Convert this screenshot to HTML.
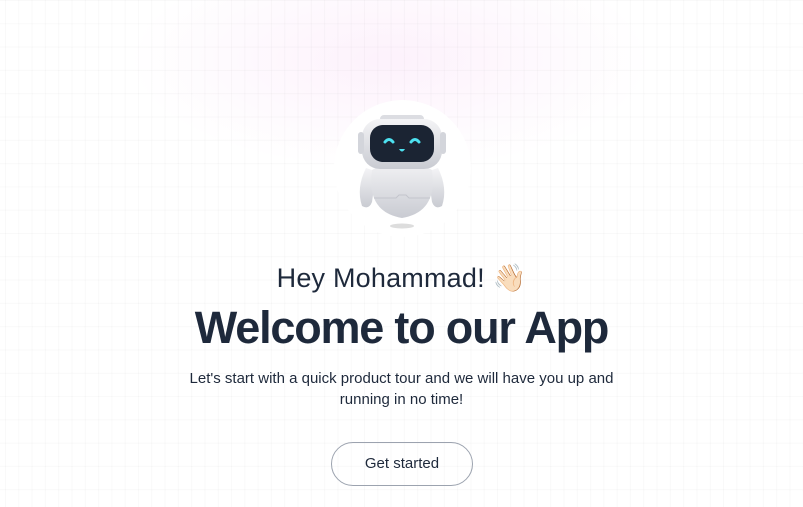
<!DOCTYPE html>
<html><head><meta charset="utf-8"><style>
html,body{margin:0;padding:0}
body{width:803px;height:507px;overflow:hidden;position:relative;font-family:"Liberation Sans",sans-serif;color:#1e293b;
background:
radial-gradient(ellipse 260px 110px at 390px 60px, rgba(250,225,248,0.45), rgba(255,255,255,0) 100%),
#fff;}
.grid{position:absolute;inset:0;background-image:linear-gradient(to right,rgba(0,0,0,0.022) 1px,transparent 1px),linear-gradient(to bottom,rgba(0,0,0,0.022) 1px,transparent 1px);background-size:13.3px 23.3px;background-position:5px 0}
.c{position:absolute;left:334px;top:100px;width:137px;height:137px;border-radius:50%;background:#fff}
h2{position:absolute;left:0;right:0;top:262px;margin:0;text-align:center;font-size:27px;font-weight:normal;letter-spacing:0.2px}
h1{position:absolute;left:0;right:0;top:302px;margin:0;text-align:center;font-size:45px;font-weight:bold;letter-spacing:-1.2px}
p{position:absolute;left:170px;width:463px;top:368px;margin:0;text-align:center;font-size:15px;line-height:21px}
.b{position:absolute;left:331px;top:442px;width:140px;height:42px;border:1px solid #9ca3af;border-radius:22px;text-align:center;line-height:42px;font-size:15px}
</style></head><body>
<div class="grid"></div>
<div class="c"></div>
<svg style="position:absolute;left:334px;top:100px" width="137" height="137" viewBox="0 0 137 137">
<defs><linearGradient id="g" x1="0" y1="0" x2="0" y2="1"><stop offset="0" stop-color="#f4f4f6"/><stop offset="1" stop-color="#c9cbd2"/></linearGradient></defs>
<ellipse cx="68" cy="126" rx="12" ry="2.5" fill="#ddd"/>
<path d="M32 68 Q22 88 28 106 Q35 110 38 102 Q40 86 44 72Z" fill="url(#g)"/>
<path d="M104 68 Q114 88 108 106 Q101 110 98 102 Q96 86 92 72Z" fill="url(#g)"/>
<path d="M38 70 Q68 50 98 70 Q104 112 68 118 Q32 112 38 70Z" fill="url(#g)"/>
<path d="M40 98 H62 L65 95 H72 L75 98 H96" stroke="#c3c5cc" stroke-width="1" fill="none"/>
<rect x="46" y="15" width="44" height="8" rx="4" fill="#dcdde2"/>
<rect x="28" y="19" width="80" height="50" rx="18" fill="url(#g)"/>
<rect x="24" y="32" width="6" height="22" rx="3" fill="#d3d5db"/>
<rect x="106" y="32" width="6" height="22" rx="3" fill="#d3d5db"/>
<rect x="36" y="25" width="64" height="37" rx="13" fill="#1b2433"/>
<path d="M51 42 q4 -5 8 0 M77 42 q4 -5 8 0" stroke="#4de1f0" stroke-width="3" fill="none" stroke-linecap="round"/>
<path d="M65 49 h6 q-3 5 -6 0Z" fill="#4de1f0"/>
</svg>
<h2>Hey Mohammad! <span style="font-family:'Noto Color Emoji','DejaVu Sans',sans-serif">👋🏻</span></h2>
<h1>Welcome to our App</h1>
<p>Let's start with a quick product tour and we will have you up and running in no time!</p>
<div class="b">Get started</div>
</body></html>
